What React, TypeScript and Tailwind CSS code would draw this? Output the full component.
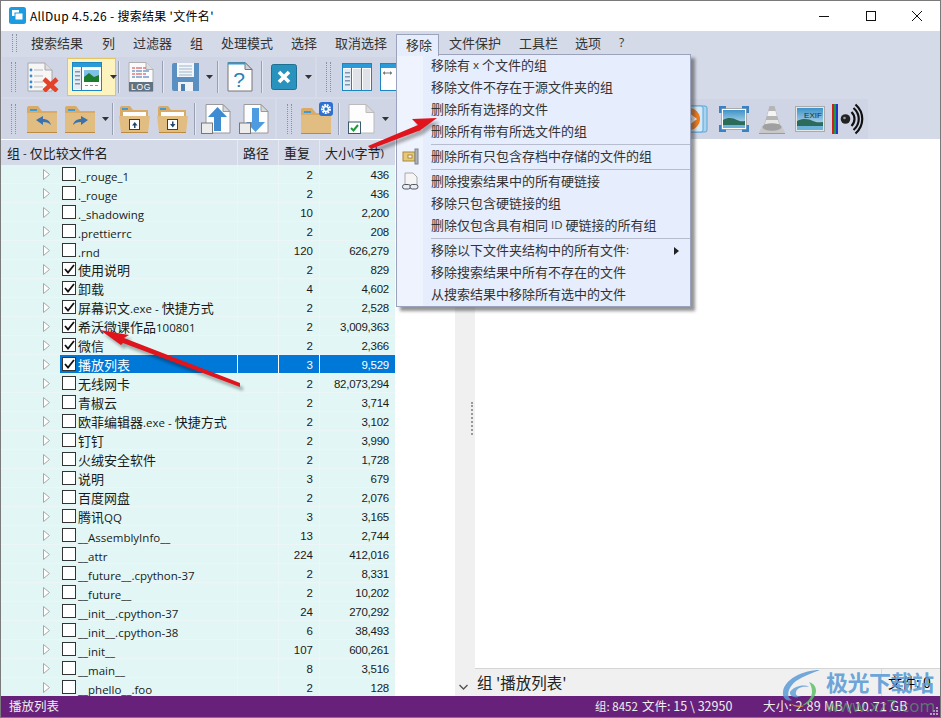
import React from "react";

const rows: [string, string, string, boolean][] = [
  ["._rouge_1", "2", "436", false],
  ["._rouge", "2", "436", false],
  ["._shadowing", "10", "2,200", false],
  [".prettierrc", "2", "208", false],
  [".rnd", "120", "626,279", false],
  ["使用说明", "2", "829", true],
  ["卸载", "4", "4,602", true],
  ["屏幕识文.exe - 快捷方式", "2", "2,528", true],
  ["希沃微课作品100801", "2", "3,009,363", true],
  ["微信", "2", "2,366", true],
  ["播放列表", "3", "9,529", true],
  ["无线网卡", "2", "82,073,294", false],
  ["青椒云", "2", "3,714", false],
  ["欧菲编辑器.exe - 快捷方式", "2", "3,102", false],
  ["钉钉", "2", "3,990", false],
  ["火绒安全软件", "2", "1,728", false],
  ["说明", "3", "679", false],
  ["百度网盘", "2", "2,076", false],
  ["腾讯QQ", "3", "3,165", false],
  ["__AssemblyInfo__", "13", "2,744", false],
  ["__attr", "224", "412,016", false],
  ["__future__.cpython-37", "2", "8,331", false],
  ["__future__", "2", "10,202", false],
  ["__init__.cpython-37", "24", "270,292", false],
  ["__init__.cpython-38", "6", "38,493", false],
  ["__init__", "107", "600,261", false],
  ["__main__", "8", "3,516", false],
  ["__phello__.foo", "2", "128", false],
];

function Mixed({ s }: { s: string }) {
  const parts = s.split(/([\x00-\x7f]+)/).filter(Boolean);
  return (
    <>
      {parts.map((p, i) =>
        /^[\x00-\x7f]/.test(p) ? (
          <span key={i} className="font-['Open_Sans'] text-[11.5px] whitespace-pre">
            {p}
          </span>
        ) : (
          <span key={i}>{p}</span>
        )
      )}
    </>
  );
}

const Grip = ({ h = "h-[30px]" }: { h?: string }) => (
  <div className={`w-[5px] ${h} border-x border-dotted border-[#8c90a0] shrink-0`} />
);
const Sep = () => <div className="w-[2px] h-[32px] border-l border-[#98a0b4] bg-[#e4e8f2] shrink-0" />;
const Drop = () => (
  <svg width="7" height="4" viewBox="0 0 7 4" className="shrink-0">
    <path d="M0 0h7L3.500 4z" fill="#333" />
  </svg>
);

const IconDocX = () => (
  <svg width="32" height="30" viewBox="0 0 32 30" className="shrink-0">
    <path d="M1 1h17l7 7v21H1z" fill="#f6f6f6" stroke="#a8a8a8" />
    <path d="M18 1v7h7" fill="#ddd" stroke="#a8a8a8" />
    {[8, 14, 20, 25].map((y) => (
      <g key={y}>
        <circle cx="4" cy={y} r="1.400" fill="#3a8ad0" />
        <path d={`M7 ${y}h9`} stroke="#bbb" />
      </g>
    ))}
    <path d="M17 17l13 12M30 17L17 29" stroke="#e2412a" strokeWidth="4.500" />
  </svg>
);
const IconWindowPreview = () => (
  <svg width="30" height="30" viewBox="0 0 30 30" className="shrink-0">
    <rect x=".5" y=".5" width="29" height="28" fill="#fff" stroke="#1b86c4" />
    <rect x="1" y="1" width="28" height="4" fill="#2a9bd8" />
    <rect x="2" y="7" width="7" height="20" fill="#e4ebf2" />
    {[9, 13, 17, 21].map((y) => (
      <rect key={y} x="3" y={y} width="5" height="1.500" fill="#7d98ad" />
    ))}
    <path d="M9.500 5v23" stroke="#1b86c4" />
    <rect x="12" y="8" width="15" height="12" fill="#7fc0e8" />
    <path d="M12 20v-5l5-4 5 4 5-2v7z" fill="#1d7b2d" />
    <path d="M13 23.500h3M18 23.500h3M23 23.500h3" stroke="#7d98ad" />
  </svg>
);
const IconLog = () => (
  <svg width="26" height="30" viewBox="0 0 26 30" className="shrink-0">
    <path d="M1 .5h17l7 7V29H1z" fill="#fafafa" stroke="#b0b0b0" />
    <path d="M18 .5v7h7" fill="#ddd" stroke="#b0b0b0" />
    {[6, 9, 12, 15].map((y, i) => (
      <path key={y} d={`M4 ${y}h3M8 ${y}h6M15 ${y}h${i % 2 ? 6 : 3}`} stroke={i % 2 ? "#2f6fb5" : "#d23b3b"} />
    ))}
    <rect x="1" y="20" width="24" height="9.500" fill="#5f7383" />
    <text x="13" y="28" textAnchor="middle" fontSize="8.500" fontFamily="Liberation Sans" fill="#fff" letterSpacing=".6">LOG</text>
  </svg>
);
const IconSave = () => (
  <svg width="27" height="28" viewBox="0 0 27 28" className="shrink-0">
    <path d="M2 0h25v28H2a2 2 0 0 1-2-2V2a2 2 0 0 1 2-2z" fill="#5a8fc2" />
    <rect x="5" y="0" width="17" height="14" fill="#f2f5f9" />
    {[3, 6, 9, 12].map((y) => (
      <path key={y} d={`M7 ${y}h13`} stroke="#9db5cc" />
    ))}
    <rect x="6" y="19" width="15" height="9" fill="#eef2f6" />
    <rect x="9" y="21" width="4" height="7" fill="#4b7fb2" />
  </svg>
);
const IconHelp = () => (
  <svg width="26" height="30" viewBox="0 0 26 30" className="shrink-0">
    <path d="M1 .5h17l7 7V29H1z" fill="#fdfdfd" stroke="#777" />
    <path d="M18 .5v7h7z" fill="#cfd4d8" stroke="#777" />
    <path d="M1 .5h17v2H1z" fill="#2a9bd8" />
    <text x="12" y="25" textAnchor="middle" fontSize="21" fontFamily="Liberation Sans" fill="#2c7fb8">?</text>
  </svg>
);
const IconX = () => (
  <svg width="26" height="26" viewBox="0 0 26 26" className="shrink-0">
    <rect x=".5" y=".5" width="25" height="25" rx="2" fill="#2a93bd" stroke="#1f6f90" />
    <path d="M8 8l10 10M18 8L8 18" stroke="#fff" strokeWidth="3.600" />
  </svg>
);
const IconCols = () => (
  <svg width="30" height="28" viewBox="0 0 30 28" className="shrink-0">
    <rect x=".5" y=".5" width="29" height="27" fill="#fff" stroke="#1b86c4" />
    <rect x="1" y="1" width="28" height="4" fill="#2a9bd8" />
    <rect x="2" y="6" width="7" height="21" fill="#e4ebf2" />
    <rect x="11" y="6" width="8" height="21" fill="#dfe3e8" />
    <rect x="21" y="6" width="7" height="21" fill="#dfe3e8" />
    <path d="M9.500 5v23M19.500 5v23" stroke="#1b86c4" />
    {[9, 13, 17, 21].map((y) => (
      <rect key={y} x="3" y={y} width="5" height="1.500" fill="#7d98ad" />
    ))}
  </svg>
);
const IconColsArrow = () => (
  <svg width="16" height="28" viewBox="0 0 16 28" className="shrink-0">
    <rect x=".5" y=".5" width="29" height="27" fill="#fff" stroke="#1b86c4" />
    <rect x="1" y="1" width="28" height="4" fill="#2a9bd8" />
    <path d="M3 10h9" stroke="#777" />
    <path d="M3 10l2-2v4zM12 10l-2-2v4z" fill="#777" />
  </svg>
);
const Folder = ({ children, w = 30 }: { children?: React.ReactNode; w?: number }) => (
  <svg width={w} height="27" viewBox="0 0 30 27" className="shrink-0 mt-[1px]">
    <path d="M0 2a2 2 0 0 1 2-2h9l4 5h15v22H0z" fill="#d9ab66" />
    <path d="M0 7h30v20H0z" fill="#e2bd82" />
    <path d="M0 26h30v1H0z" fill="#b98a3f" />
    <rect x="3" y="3" width="7" height="2" fill="#3f9bd6" />
    {children}
  </svg>
);
const BackArrow = () => <path d="M9 14l7-4v3c4 0 7 2 8 6-2-2-4-3-8-3v3z" fill="#3a72b0" />;
const FwdArrow = () => <path d="M23 14l-7-4v3c-4 0-7 2-8 6 2-2 4-3 8-3v3z" fill="#3a72b0" />;
const FolderOpen = ({ down }: { down?: boolean }) => (
  <svg width="31" height="27" viewBox="0 0 31 27" className="shrink-0">
    <path d="M1 2a2 2 0 0 1 2-2h8l3 4h15v6H1z" fill="#d9ab66" />
    <rect x="3" y="2" width="6" height="2" fill="#3f9bd6" />
    <rect x="4" y="6" width="23" height="6" fill="#fff" />
    <path d="M0 10h31l-2 17H2z" fill="#e2bd82" />
    <path d="M2 26h27v1H2z" fill="#b98a3f" />
    <rect x="10.500" y="13.500" width="10" height="10" fill="#fff" stroke="#25466b" />
    <path d={down ? "M13 18h2v-2.500h1.500V18h2l-2.750 3.500z" : "M13 19.500h2V22h1.500v-2.500h2L15.750 16z"} fill="#25466b" />
  </svg>
);
const DocArrow = ({ down }: { down?: boolean }) => (
  <svg width="30" height="30" viewBox="0 0 30 30" className="shrink-0">
    <path d="M5 .5h17l7 7V29H5z" fill="#fdfdfd" stroke="#9a9a9a" />
    <path d="M22 .5v7h7z" fill="#d8d8d8" stroke="#9a9a9a" />
    <path
      d={down ? "M13 4h7v14h6L16.500 28 7 18h6z" : "M16.500 3L26 13h-6v14h-7V13H7z"}
      fill={down ? "#4d9be0" : "#3e8bd2"}
    />
    <rect x=".5" y="19" width="11" height="10.500" fill="#ececec" stroke="#777" />
  </svg>
);
const FolderGear = () => (
  <svg width="32" height="32" viewBox="0 0 32 32" className="shrink-0">
    <path d="M0 8a2 2 0 0 1 2-2h9l4 5h15v21H0z" fill="#d9ab66" />
    <path d="M0 13h30v19H0z" fill="#e2bd82" />
    <path d="M0 31h30v1H0z" fill="#b98a3f" />
    <rect x="3" y="9" width="7" height="2" fill="#3f9bd6" />
    <rect x="18" y="0" width="14" height="14" rx="3" fill="#2f6fd0" />
    <circle cx="25" cy="7" r="3.800" fill="none" stroke="#fff" strokeWidth="2.400" strokeDasharray="1.800 .8" />
    <circle cx="25" cy="7" r="2.400" fill="none" stroke="#fff" strokeWidth="1.400" />
  </svg>
);
const DocCheck = () => (
  <svg width="27" height="30" viewBox="0 0 27 30" className="shrink-0">
    <path d="M1 .5h17l8 8V29H1z" fill="#fdfdfd" stroke="#bbb" />
    <path d="M18 .5v8h8z" fill="#dcdcdc" stroke="#bbb" />
    <rect x=".5" y="18" width="12" height="11.500" fill="#fff" stroke="#3b5a6e" />
    <path d="M3 24l2.500 2.500L10 21" stroke="#1f9a3a" strokeWidth="2" fill="none" />
  </svg>
);
const IconPlay = () => (
  <svg width="30" height="28" viewBox="0 0 30 28" className="shrink-0">
    <rect x="4" y="1" width="25" height="26" rx="2" fill="#a9d3ee" stroke="#5ca6d8" />
    <rect x="0" y="1" width="25" height="26" rx="2" fill="#d5e8f6" stroke="#5ca6d8" />
    <circle cx="11" cy="14" r="11" fill="#ee7a1c" />
    <path d="M10 7l9 7-9 7-2-2 6-5-6-5z" fill="#fff" />
  </svg>
);
const IconPhoto = () => (
  <svg width="30" height="28" viewBox="0 0 30 28" className="shrink-0">
    <defs>
      <linearGradient id="sky" x1="0" y1="0" x2="0" y2="1">
        <stop offset="0" stopColor="#3f93c8" />
        <stop offset="1" stopColor="#d5ecf6" />
      </linearGradient>
    </defs>
    <rect x="2.500" y="3.500" width="25" height="21" fill="#fff" stroke="#aaa" />
    <rect x="4" y="5" width="22" height="18" fill="url(#sky)" />
    <path d="M4 15c5-3 10-2 14 0s6 1 8 1v4H4z" fill="#2c6a5a" />
    <rect x="4" y="20" width="22" height="3" fill="#6cb3dc" />
    <path d="M0 8V1h7v2.500H2.500V8zM30 8V1h-7v2.500h4.500V8zM0 20v7h7v-2.500H2.500V20zM30 20v7h-7v-2.500h4.500V20z" fill="#3b82c4" />
  </svg>
);
const IconCone = () => (
  <svg width="26" height="29" viewBox="0 0 26 29" className="shrink-0">
    <path d="M10.500 1h5l6 21h-17z" fill="#b5b5b5" />
    <path d="M9.500 6h7l1.300 5H8.200z" fill="#f4f4f4" />
    <path d="M7 15h12l1 4H6z" fill="#e6e6e6" />
    <path d="M3 21h20l3 7H0z" fill="#c8c8c8" />
    <ellipse cx="13" cy="22" rx="9.500" ry="3.800" fill="#a0a0a0" />
    <path d="M0 28h26v1H0z" fill="#9a9a9a" />
  </svg>
);
const IconExif = () => (
  <svg width="30" height="26" viewBox="0 0 30 26" className="shrink-0">
    <rect x=".5" y=".5" width="29" height="25" fill="#e6e6e6" stroke="#aaa" />
    <rect x="2" y="2" width="26" height="22" fill="url(#sky)" />
    <path d="M2 15c6-3 12-2 16 0s7 1 10 1v4H2z" fill="#2c6a5a" />
    <rect x="2" y="20" width="26" height="4" fill="#6cb3dc" />
    <text x="18" y="11.500" textAnchor="middle" fontSize="8" fontFamily="Liberation Sans" fill="#1c2a3a">EXIF</text>
  </svg>
);
const IconSpeaker = () => (
  <svg width="33" height="32" viewBox="0 0 33 32" className="shrink-0">
    <rect x="0" y="1" width="2" height="30" fill="#d21f1f" />
    <rect x="2" y="1" width="2" height="30" fill="#1f9a3a" />
    <rect x="4" y="1" width="2" height="30" fill="#2233d0" />
    <circle cx="13.500" cy="16" r="4.800" fill="#222" />
    <circle cx="12.500" cy="15" r="1.300" fill="#999" />
    <path d="M19.500 9c4 4 4 10 0 14" fill="none" stroke="#111" strokeWidth="2.200" />
    <path d="M21.500 5c7 6 7 16 0 22" fill="none" stroke="#111" strokeWidth="2.200" />
    <path d="M23.500 1.500c9 8 9 21 0 29" fill="none" stroke="#111" strokeWidth="2.200" />
  </svg>
);

const menu: (string | null)[] = [
  "移除有 x 个文件的组",
  "移除文件不存在于源文件夹的组",
  "删除所有选择的文件",
  "删除所有带有所选文件的组",
  null,
  "删除所有只包含存档中存储的文件的组",
  null,
  "删除搜索结果中的所有硬链接",
  "移除只包含硬链接的组",
  "删除仅包含具有相同 ID 硬链接的所有组",
  null,
  "移除以下文件夹结构中的所有文件:",
  "移除搜索结果中所有不存在的文件",
  "从搜索结果中移除所有选中的文件",
];

const Arrow = ({ pts }: { pts: string }) => (
  <>
    <polygon points={pts} fill="#000" opacity=".3" transform="translate(3 4)" filter="url(#blur)" />
    <polygon points={pts} fill="#e0141c" />
  </>
);

export default function App() {
  return (
    <div className="relative w-[941px] h-[718px] overflow-hidden bg-white border border-[#7a7a7a] flex flex-col font-['Noto_Sans_CJK_SC','Noto_Sans',sans-serif] text-[13px] text-[#1a1a1a]">
      {/* title bar */}
      <div className="h-[30px] shrink-0 flex items-center bg-white pl-[8px] pb-[1px]">
        <svg width="17" height="17" viewBox="0 0 17 17" className="shrink-0">
          <rect width="17" height="17" rx="2.500" fill="#1c9ce0" />
          <rect x="3" y="3" width="7" height="6" fill="#fff" />
          <rect x="6" y="6" width="8" height="7" fill="#fff" stroke="#1c9ce0" />
        </svg>
        <div className="ml-[4px] text-[12px] tracking-[0.3px] text-black whitespace-pre">AllDup 4.5.26 - 搜索结果 '文件名'</div>
        <div className="ml-auto flex items-center">
          <svg width="46" height="20" viewBox="0 0 46 20" className="shrink-0">
            <path d="M17 10.500h10" stroke="#111" />
          </svg>
          <svg width="46" height="20" viewBox="0 0 46 20" className="shrink-0">
            <rect x="18.500" y="5.500" width="9" height="9" fill="none" stroke="#111" />
          </svg>
          <svg width="46" height="20" viewBox="0 0 46 20" className="shrink-0">
            <path d="M18 5l10 10M28 5L18 15" stroke="#111" />
          </svg>
        </div>
      </div>
      {/* menu bar */}
      <div className="h-[26px] shrink-0 bg-[#d5dae8] flex items-center pl-[11px] pb-[3px] text-[#333]">
        <Grip h="h-[18px]" />
        <div className="ml-[14px] w-[71px]">搜索结果</div>
        <div className="w-[31px]">列</div>
        <div className="w-[57px]">过滤器</div>
        <div className="w-[31px]">组</div>
        <div className="w-[70px]">处理模式</div>
        <div className="w-[44px]">选择</div>
        <div className="w-[71px]">取消选择</div>
        <div className="w-[43px]" />
        <div className="w-[70px]">文件保护</div>
        <div className="w-[56px]">工具栏</div>
        <div className="w-[44px]">选项</div>
        <div className="font-['Open_Sans'] text-[12px]">?</div>
      </div>
      {/* toolbars */}
      <div className="h-[82px] shrink-0 bg-[#d5dae8] flex flex-col gap-[2px] pl-px">
        <div className="flex h-[40px] gap-[2px]">
          <div className="w-[313px] bg-[#cfd5e5] flex items-center pl-[9px]">
            <Grip />
            <div className="ml-[11px]"><IconDocX /></div>
            <div className="ml-[8px] w-[49px] h-[38px] bg-[#fdf3bf] border border-[#e3c368] flex items-center pl-[4px] gap-[8px]">
              <IconWindowPreview />
              <Drop />
            </div>
            <div className="ml-[2px]"><Sep /></div>
            <div className="ml-[8px]"><IconLog /></div>
            <div className="ml-[8px]"><Sep /></div>
            <div className="ml-[8px]"><IconSave /></div>
            <div className="ml-[7px]"><Drop /></div>
            <div className="ml-[4px]"><Sep /></div>
            <div className="ml-[8px]"><IconHelp /></div>
            <div className="ml-[8px]"><Sep /></div>
            <div className="ml-[8px]"><IconX /></div>
            <div className="ml-[8px]"><Drop /></div>
          </div>
          <div className="w-[120px] bg-[#cfd5e5] flex items-center pl-[9px]">
            <Grip />
            <div className="ml-[11px]"><IconCols /></div>
            <div className="ml-[8px]"><IconColsArrow /></div>
          </div>
        </div>
        <div className="flex h-[40px] gap-[2px]">
          <div className="w-[273px] bg-[#cfd5e5] flex items-center pl-[9px]">
            <Grip />
            <div className="ml-[11px]"><Folder><BackArrow /></Folder></div>
            <div className="ml-[8px]"><Folder><FwdArrow /></Folder></div>
            <div className="ml-[7px]"><Drop /></div>
            <div className="ml-[3px]"><Sep /></div>
            <div className="ml-[5px]"><FolderOpen /></div>
            <div className="ml-[7px]"><FolderOpen down /></div>
            <div className="ml-[6px]"><Sep /></div>
            <div className="ml-[5px]"><DocArrow /></div>
            <div className="ml-[8px]"><DocArrow down /></div>
          </div>
          <div className="w-[591px] bg-[#cfd5e5] flex items-center pl-[10px]">
            <Grip />
            <div className="ml-[9px] -mt-[3px]"><FolderGear /></div>
            <div className="ml-[5px]"><Sep /></div>
            <div className="ml-[8px]"><DocCheck /></div>
            <div className="ml-[7px]"><Drop /></div>
            <div className="ml-[289px]"><IconPlay /></div>
            <div className="ml-[11px]"><IconPhoto /></div>
            <div className="ml-[10px]"><IconCone /></div>
            <div className="ml-[10px]"><IconExif /></div>
            <div className="ml-[7px]"><IconSpeaker /></div>
          </div>
        </div>
      </div>
      {/* body */}
      <div className="flex-1 min-h-0 flex bg-white mt-[1px]">
        <div className="w-[394px] shrink-0 flex flex-col overflow-hidden">
          <div className="h-[25px] shrink-0 bg-[#d5dae8] flex items-center text-[#222]">
            <div className="w-[237px] pl-[6px] border-r border-[#e6e9f2] h-full flex items-center"><Mixed s="组 - 仅比较文件名" /></div>
            <div className="w-[41px] pl-[5px] border-r border-[#e6e9f2] h-full flex items-center">路径</div>
            <div className="w-[41px] pl-[5px] border-r border-[#e6e9f2] h-full flex items-center">重复</div>
            <div className="flex-1 pl-[5px] flex items-center h-full"><Mixed s="大小(字节)" /></div>
          </div>
          <div className="flex-1 min-h-0 overflow-hidden bg-[#e2f7f5]">
            {rows.map(([n, d, s, c]) => {
              const sel = n === "播放列表";
              const latin = /^[\x00-\x7f]+$/.test(n);
              return (
                <div key={n} className="relative h-[19px] flex items-center border-b border-[#edf6f6]">
                  <div className={`w-[237px] h-full flex items-center pl-[42px] border-r ${sel ? "border-white" : "border-[#edf6f6]"}`}>
                    <svg width="7" height="11" viewBox="0 0 7 11" className="shrink-0">
                      <path d="M.5.500l6 5-6 5z" fill="#fff" stroke="#a8a8a8" />
                    </svg>
                    <div className={`h-full flex items-center flex-1 ml-[10px] pl-[2px] ${sel ? "bg-[#0078d7] text-white" : ""}`}>
                      <div className="w-[14px] h-[14px] shrink-0 bg-white border border-[#333] flex items-center justify-center">
                        {c && (
                          <svg width="11" height="10" viewBox="0 0 11 10">
                            <path d="M1 5l3 3.500L10 1" fill="none" stroke="#111" strokeWidth="1.800" />
                          </svg>
                        )}
                      </div>
                      <div className={`ml-[2px] whitespace-nowrap ${latin ? "pt-[3px]" : "pt-[1px]"}`}><Mixed s={n} /></div>
                    </div>
                  </div>
                  <div className={`w-[41px] h-full border-r ${sel ? "bg-[#0078d7] border-white" : "border-[#edf6f6]"}`} />
                  <div className={`w-[41px] h-full border-r flex items-center justify-end pr-[6px] pt-[3px] font-['Liberation_Sans'] text-[11.500px] ${sel ? "bg-[#0078d7] border-white text-white" : "border-[#edf6f6]"}`}>{d}</div>
                  <div className={`flex-1 h-full flex items-center justify-end pr-[6px] pt-[3px] font-['Liberation_Sans'] text-[11.500px] tracking-[-0.25px] ${sel ? "bg-[#0078d7] text-white" : ""}`}>{s}</div>
                </div>
              );
            })}
          </div>
        </div>
        <div className="w-[60px] shrink-0 bg-white" />
        <div className="w-[20px] shrink-0 bg-[#f0f0f0] flex flex-col items-end relative">
          <div className="mt-[262px] mr-[2px] h-[33px] w-[2px] border-l-2 border-dotted border-[#999]" />
          <svg width="9" height="6" viewBox="0 0 9 6" className="mt-auto mb-[6px] mr-[7px]">
            <path d="M.5 1l4 4 4-4" fill="none" stroke="#555" strokeWidth="1.400" />
          </svg>
        </div>
        <div className="flex-1 flex flex-col min-w-0">
          <div className="flex-1 bg-white" />
          <div className="h-[28px] shrink-0 bg-[#f0f0f0] border-t border-[#d4d4d4] flex items-center text-[15.500px] text-[#222]">
            <div className="pl-[2px] whitespace-pre">组 '播放列表'</div>
            <div className="ml-auto h-full w-[59px] border-l border-[#d8d8d8] flex items-center pl-[6px] text-black whitespace-pre text-[14px]">文件: 0</div>
          </div>
        </div>
      </div>
      {/* status */}
      <div className="h-[21px] shrink-0 bg-[#68217a] text-[#eee] text-[12.500px] flex items-center pl-[8px] relative">
        <div className="w-[586px]">播放列表</div>
        <div className="w-[47px] whitespace-pre text-[11.500px]">组: 8452</div>
        <div className="w-[121px] whitespace-pre">文件: 15 \ 32950</div>
        <div className="whitespace-pre tracking-[0.3px]">大小: 2.89 MB \ 10.71 GB</div>
        <svg width="10" height="10" viewBox="0 0 10 10" className="absolute right-[2px] bottom-[2px]">
          {[[8,0],[8,3],[8,6],[5,3],[5,6],[2,6]].map(([x, y]) => (
            <rect key={`${x}${y}`} x={x} y={y + 2} width="2" height="2" fill="#b9a0c2" />
          ))}
        </svg>
      </div>

      {/* open menu tab */}
      <div className="absolute left-[395px] top-[33px] w-[43px] h-[22px] bg-[#e6edfc] border border-b-0 border-[#9aa3bb] flex items-center pl-[9px] pb-[2px] text-[#333] z-10">移除</div>
      {/* dropdown */}
      <div className="absolute left-[395px] top-[53px] w-[295px] bg-[#e6edfc] border border-[#9aa3bb] shadow-[4px_4px_3px_rgba(60,60,60,0.55)] flex flex-col text-[#333] z-[9]">
        <div className="absolute left-0 top-0 bottom-0 w-[26px] bg-[#eff3fd]" />
        {menu.map((m, i) =>
          m === null ? (
            <div key={i} className="relative h-[3px] ml-[34px] flex items-center">
              <div className="w-full h-px bg-[#b7bdcd]" />
            </div>
          ) : (
            <div key={i} className="relative h-[22px] flex items-center pl-[34px] pb-[2px] whitespace-pre">
              <Mixed s={m} />
              {i === 5 && (
                <svg width="20" height="20" viewBox="0 0 20 20" className="absolute left-[4px] top-[1px]">
                  <rect x="2" y="5" width="12" height="9" fill="#e8c877" stroke="#a98a3a" />
                  <rect x="7" y="8" width="4" height="3" fill="#fff" stroke="#a98a3a" />
                  <rect x="14" y="2" width="3" height="15" fill="#aeb4bd" stroke="#7c838c" />
                </svg>
              )}
              {i === 7 && (
                <svg width="20" height="20" viewBox="0 0 20 20" className="absolute left-[4px] top-[1px]">
                  <path d="M4 1h8l4 4v10H4z" fill="#f5f5f5" stroke="#a9a9a9" />
                  <rect x="1.500" y="12.500" width="8" height="4.500" rx="2.200" fill="#e6edfc" stroke="#555" />
                  <rect x="9" y="12.500" width="8" height="4.500" rx="2.200" fill="#e6edfc" stroke="#555" />
                </svg>
              )}
              {i === 11 && (
                <svg width="5" height="8" viewBox="0 0 5 8" className="absolute right-[11px] top-[7px]">
                  <path d="M0 0l5 4-5 4z" fill="#222" />
                </svg>
              )}
            </div>
          )
        )}
      </div>

      {/* annotations */}
      <svg width="941" height="718" viewBox="0 0 941 718" className="absolute -left-px -top-px z-20 pointer-events-none">
        <defs>
          <filter id="blur"><feGaussianBlur stdDeviation="1.500" /></filter>
        </defs>
        <Arrow pts="100,330 129,335 124,338 240,383 240,387 123,343 121,345" />
        <Arrow pts="437,118 412,119 418,125 368,146 371,149 421,130 415,134" />
      </svg>

      {/* watermark */}
      <div className="absolute left-[781px] top-[667px] z-20 w-[155px] h-[50px] pointer-events-none">
        <svg width="42" height="42" viewBox="0 0 42 42" className="absolute left-0 top-0">
          <path d="M38 2C20 2 2 12 1 24c-1 6 4 10 9 8C4 30 5 20 14 13 22 8 30 5 38 2z" fill="#5b9bd5" opacity=".85" />
          <path d="M8 24c4-6 14-8 19-5-5-1-12 0-13 5-1 3 2 5 5 4-4 3-12 1-11-4z" fill="#5b9bd5" opacity=".8" />
          <path d="M27 14c7 2 9 9 5 15-3 5-8 8-13 9 7-4 11-9 11-14 0-4-1-7-3-10z" fill="#5fbf6a" opacity=".85" />
          <path d="M9 36c3 3 9 4 13 2-5 0-10-1-13-2z" fill="#e9a53c" opacity=".9" />
        </svg>
        <div className="absolute left-[44px] top-[-2px] text-[22px] leading-[30px] font-bold text-[#5b9bd5]/90 whitespace-nowrap tracking-[-0.5px]">极光下载站</div>
        <div className="absolute left-[44px] top-[27px] text-[17px] leading-[22px] font-['Open_Sans'] text-[#4ea56a]/70 whitespace-nowrap">www.xz7.com</div>
      </div>
    </div>
  );
}
